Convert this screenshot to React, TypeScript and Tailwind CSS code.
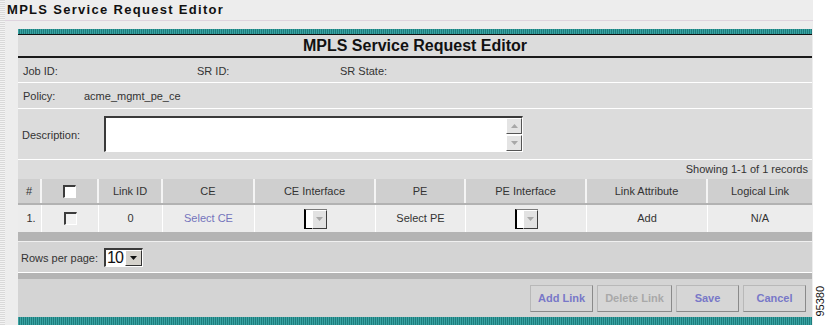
import React from 'react';

const COLS = 'grid grid-cols-[24px_57px_64px_92px_121px_90px_121px_121px_104px]';

const HEADERS = ['#', '', 'Link ID', 'CE', 'CE Interface', 'PE', 'PE Interface', 'Link Attribute', 'Logical Link'];

const Checkbox = ({ white }: { white?: boolean }) => (
  <div
    className={`h-[13px] w-[13px] border-l-2 border-t-2 border-b border-r border-l-[#3c3c3c] border-t-[#3c3c3c] border-b-white border-r-white ${
      white ? 'bg-white' : 'bg-[#f2f2f2]'
    }`}
  />
);

const Arrow = ({ up, color }: { up?: boolean; color: string }) => (
  <svg width="7" height="4" viewBox="0 0 7 4">
    <path d={up ? 'M0 4 L3.5 0 L7 4 Z' : 'M0 0 L7 0 L3.5 4 Z'} fill={color} />
  </svg>
);

const EmptySelect = () => (
  <div className="flex h-[20px] w-[23px] border-l-2 border-t border-l-black border-t-[#7a7a7a] bg-white">
    <div className="flex-1 border-b border-black" />
    <div className="flex w-[15px] items-center justify-center border border-b-[#3c3c3c] border-r-[#3c3c3c] border-l-white border-t-white bg-[#e2e2e2]">
      <Arrow color="#a8a8a8" />
    </div>
  </div>
);

const Button = ({ label, width, disabled }: { label: string; width: string; disabled?: boolean }) => (
  <button
    className={`${width} h-[27px] border border-t-[#b8b8b8] border-l-[#b8b8b8] border-b-[#8a8a8a] border-r-[#8a8a8a] bg-[#d6d6d6] text-[11px] font-bold ${
      disabled ? 'text-[#a9a9a9]' : 'text-[#7878c8]'
    }`}
  >
    {label}
  </button>
);

export default function App() {
  return (
    <div className="flex h-[325px] w-[828px] overflow-hidden bg-white font-['Liberation_Sans',Arial,sans-serif] text-[11px] text-[#333]">
      <div className="flex w-[813px] bg-[#ededed]">
        {/* striped edge */}
        <div className="w-[5px] bg-[repeating-linear-gradient(180deg,#d9d9d9_0_1px,#f3f3f3_1px_2px)]" />

        <div className="flex flex-1 flex-col">
          <div className="flex h-[20px] items-center pl-[2px] text-[13px] font-bold tracking-[1.3px] text-[#111]">
            MPLS Service Request Editor
          </div>
          <div className="h-px bg-[#ded4de]" />

          <div className="pl-[13px] pt-[9px]">
            <div className="flex w-[794px] flex-col bg-[#dcdcdc]">
              <div className="h-[5px] bg-[repeating-linear-gradient(90deg,#3aa3a3_0_1px,#1e7d7d_1px_2px)]" />
              <div className="h-px bg-[#111]" />
              <div className="flex h-[21px] items-center justify-center text-[16px] font-bold text-[#111]">
                MPLS Service Request Editor
              </div>
              <div className="h-[2px] bg-[#1a1a1a]" />

              <div className="flex h-[24px] items-center pl-[5px] pt-[3px]">
                <span className="w-[174px]">Job ID:</span>
                <span className="w-[143px]">SR ID:</span>
                <span>SR State:</span>
              </div>
              <div className="h-px bg-white" />
              <div className="flex h-[25px] items-center pl-[5px] pt-[2px]">
                <span className="w-[61px]">Policy:</span>
                <span>acme_mgmt_pe_ce</span>
              </div>
              <div className="h-px bg-white" />

              <div className="flex h-[50px] items-center pl-[4px]">
                <span className="w-[82px] pt-[2px]">Description:</span>
                <div className="flex h-[36px] w-[419px] border-l-2 border-t-2 border-b border-r border-l-[#3a3a3a] border-t-[#3a3a3a] border-b-white border-r-white">
                  <div className="flex-1 bg-white" />
                  <div className="flex w-[16px] flex-col justify-between bg-white">
                    <div className="flex h-[16px] items-center justify-center border border-b-[#555] border-r-[#555] border-l-white border-t-white bg-[#e4e4e4]">
                      <Arrow up color="#a8a8a8" />
                    </div>
                    <div className="flex h-[16px] items-center justify-center border border-b-[#555] border-r-[#555] border-l-white border-t-white bg-[#e4e4e4]">
                      <Arrow color="#a8a8a8" />
                    </div>
                  </div>
                </div>
              </div>
              <div className="h-px bg-white" />

              <div className="flex h-[19px] items-center justify-end pr-[4px]">
                Showing 1-1 of 1 records
              </div>

              {/* table header */}
              <div className={`${COLS} h-[26px] border-b-2 border-[#b2b2b2] bg-[#cfcfcf]`}>
                {HEADERS.map((h, i) => (
                  <div
                    key={i}
                    className={`flex items-center justify-center ${i < HEADERS.length - 1 ? 'border-r-2 border-[#f4f4f4]' : ''}`}
                  >
                    {i === 1 ? <Checkbox white /> : h}
                  </div>
                ))}
              </div>

              {/* data row */}
              <div className={`${COLS} h-[27px] bg-[#ececec]`}>
                <div className="flex items-center justify-center border-r border-white pl-[3px]">1.</div>
                <div className="flex items-center justify-center border-r border-white">
                  <Checkbox />
                </div>
                <div className="flex items-center justify-center border-r border-white">0</div>
                <div className="flex items-center justify-center border-r border-white text-[#7474bc]">Select CE</div>
                <div className="flex items-center justify-center border-r border-white">
                  <EmptySelect />
                </div>
                <div className="flex items-center justify-center border-r border-white">Select PE</div>
                <div className="flex items-center justify-center border-r border-white">
                  <EmptySelect />
                </div>
                <div className="flex items-center justify-center border-r border-white">Add</div>
                <div className="flex items-center justify-center">N/A</div>
              </div>

              <div className="h-[9px] bg-[#b4b4b4]" />
              <div className="h-px bg-[#f0f0f0]" />

              <div className="flex h-[30px] items-center bg-[#d4d4d4] pl-[3px]">
                <span className="w-[83px] pt-[2px]">Rows per page:</span>
                <div className="flex h-[19px] w-[39px] border-l-2 border-t-2 border-b border-r border-l-[#3a3a3a] border-t-[#3a3a3a] border-b-white border-r-white bg-white">
                  <div className="flex flex-1 items-center pl-[1px] text-[16px] leading-none tracking-[-1px] text-[#111]">10</div>
                  <div className="flex w-[17px] items-center justify-center border border-b-[#333] border-r-[#333] border-l-white border-t-white bg-[#d6d3cc]">
                    <Arrow color="#111" />
                  </div>
                </div>
              </div>
              <div className="h-px bg-white" />
              <div className="h-[6px] bg-[#b4b4b4]" />

              <div className="flex h-[38px] items-center justify-end gap-[4px] bg-[#d4d4d4] pr-[6px]">
                <Button label="Add Link" width="w-[63px]" />
                <Button label="Delete Link" width="w-[75px]" disabled />
                <Button label="Save" width="w-[63px]" />
                <Button label="Cancel" width="w-[63px]" />
              </div>

              <div className="h-[8px] bg-[repeating-linear-gradient(90deg,#3aa3a3_0_1px,#1e7d7d_1px_2px)]" />
            </div>
          </div>
        </div>
      </div>

      <div className="flex flex-1 items-end justify-center pb-[8px]">
        <span className="rotate-180 text-[11px] leading-none text-[#111] [writing-mode:vertical-rl]">95380</span>
      </div>
    </div>
  );
}
